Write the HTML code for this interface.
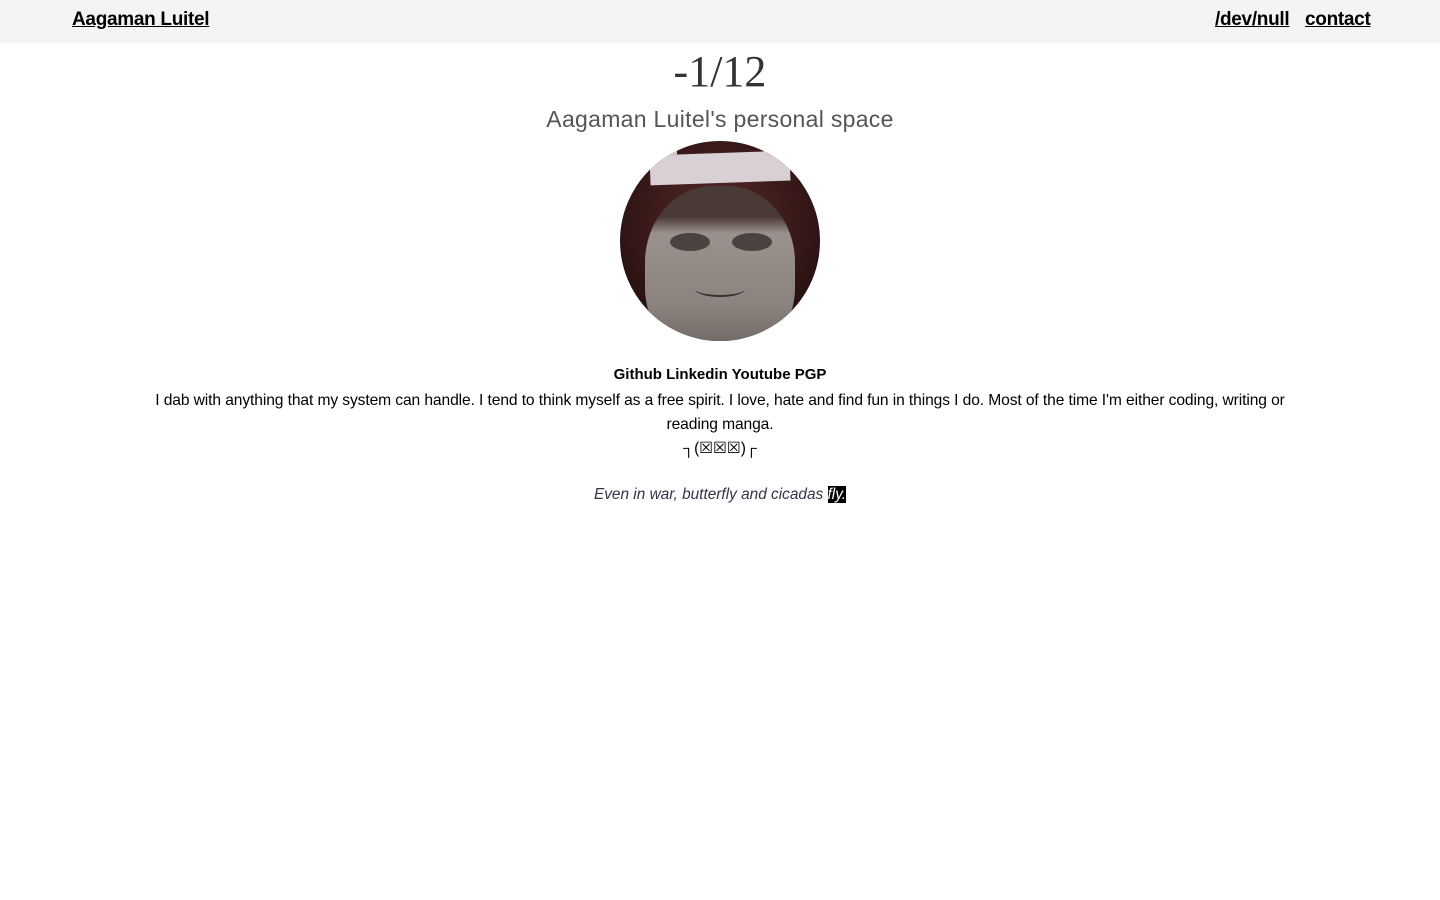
<!DOCTYPE html>
<html><head><meta charset="utf-8"><style>
body{margin:0;background:#fff;font-family:"Liberation Sans","Noto Sans CJK JP",sans-serif;color:#111}
.nav{height:43px;background:#f4f4f4;position:relative}
.nav a{position:absolute;top:9px;font-size:19px;color:#000;text-decoration:underline;letter-spacing:-0.3px;font-weight:600}
h1{margin:0;position:absolute;top:46px;left:0;width:1440px;text-align:center;font-family:"Liberation Serif",serif;font-weight:normal;font-size:44px;color:#333}
.sub{position:absolute;top:106px;width:1440px;text-align:center;font-size:23px;color:#555;letter-spacing:0.3px}
.av{position:absolute;left:620px;top:141px;width:200px;height:200px;border-radius:50%;overflow:hidden;background:radial-gradient(circle at 50% 40%,#5a2a28,#2a1212 70%)}
.t{position:absolute;width:1440px;text-align:center;font-size:15.6px;color:#000}
</style></head><body>
<div class="nav"><a style="left:72px">Aagaman Luitel</a><a style="left:1215px">/dev/null</a><a style="left:1305px">contact</a></div>
<h1>-1/12</h1>
<div class="sub">Aagaman Luitel's personal space</div>
<div class="av">
<div style="position:absolute;left:30px;top:12px;width:140px;height:30px;background:#d8d0d4;transform:rotate(-2deg)"></div>
<div style="position:absolute;left:35px;top:-10px;width:22px;height:25px;background:#d0c8cc"></div>
<div style="position:absolute;left:145px;top:-10px;width:22px;height:25px;background:#d0c8cc"></div>
<div style="position:absolute;left:25px;top:45px;width:150px;height:170px;border-radius:45% 45% 40% 40%;background:linear-gradient(#4a3a36 0,#4a3a36 18%,#9a918c 28%,#8c837e 70%,#6a625e)"></div>
<div style="position:absolute;left:50px;top:92px;width:40px;height:18px;border-radius:50%;background:#4a4240"></div>
<div style="position:absolute;left:112px;top:92px;width:40px;height:18px;border-radius:50%;background:#4a4240"></div>
<div style="position:absolute;left:75px;top:140px;width:50px;height:14px;border-bottom:2px solid #333;border-radius:0 0 50% 50%"></div>
</div>
<div class="t" style="top:366px;font-weight:bold;font-size:15px">Github Linkedin Youtube PGP</div>
<div class="t" style="top:389px;line-height:24px;letter-spacing:-0.1px">I dab with anything that my system can handle. I tend to think myself as a free spirit. I love, hate and find fun in things I do. Most of the time I'm either coding, writing or<br>reading manga.<br>┐(☒☒☒)┌</div>
<div class="t" style="top:486px;font-style:italic;color:#3a3048;font-size:15.4px">Even in war, butterfly and cicadas <span style="background:#000;color:#fff">fly.</span></div>
</body></html>
